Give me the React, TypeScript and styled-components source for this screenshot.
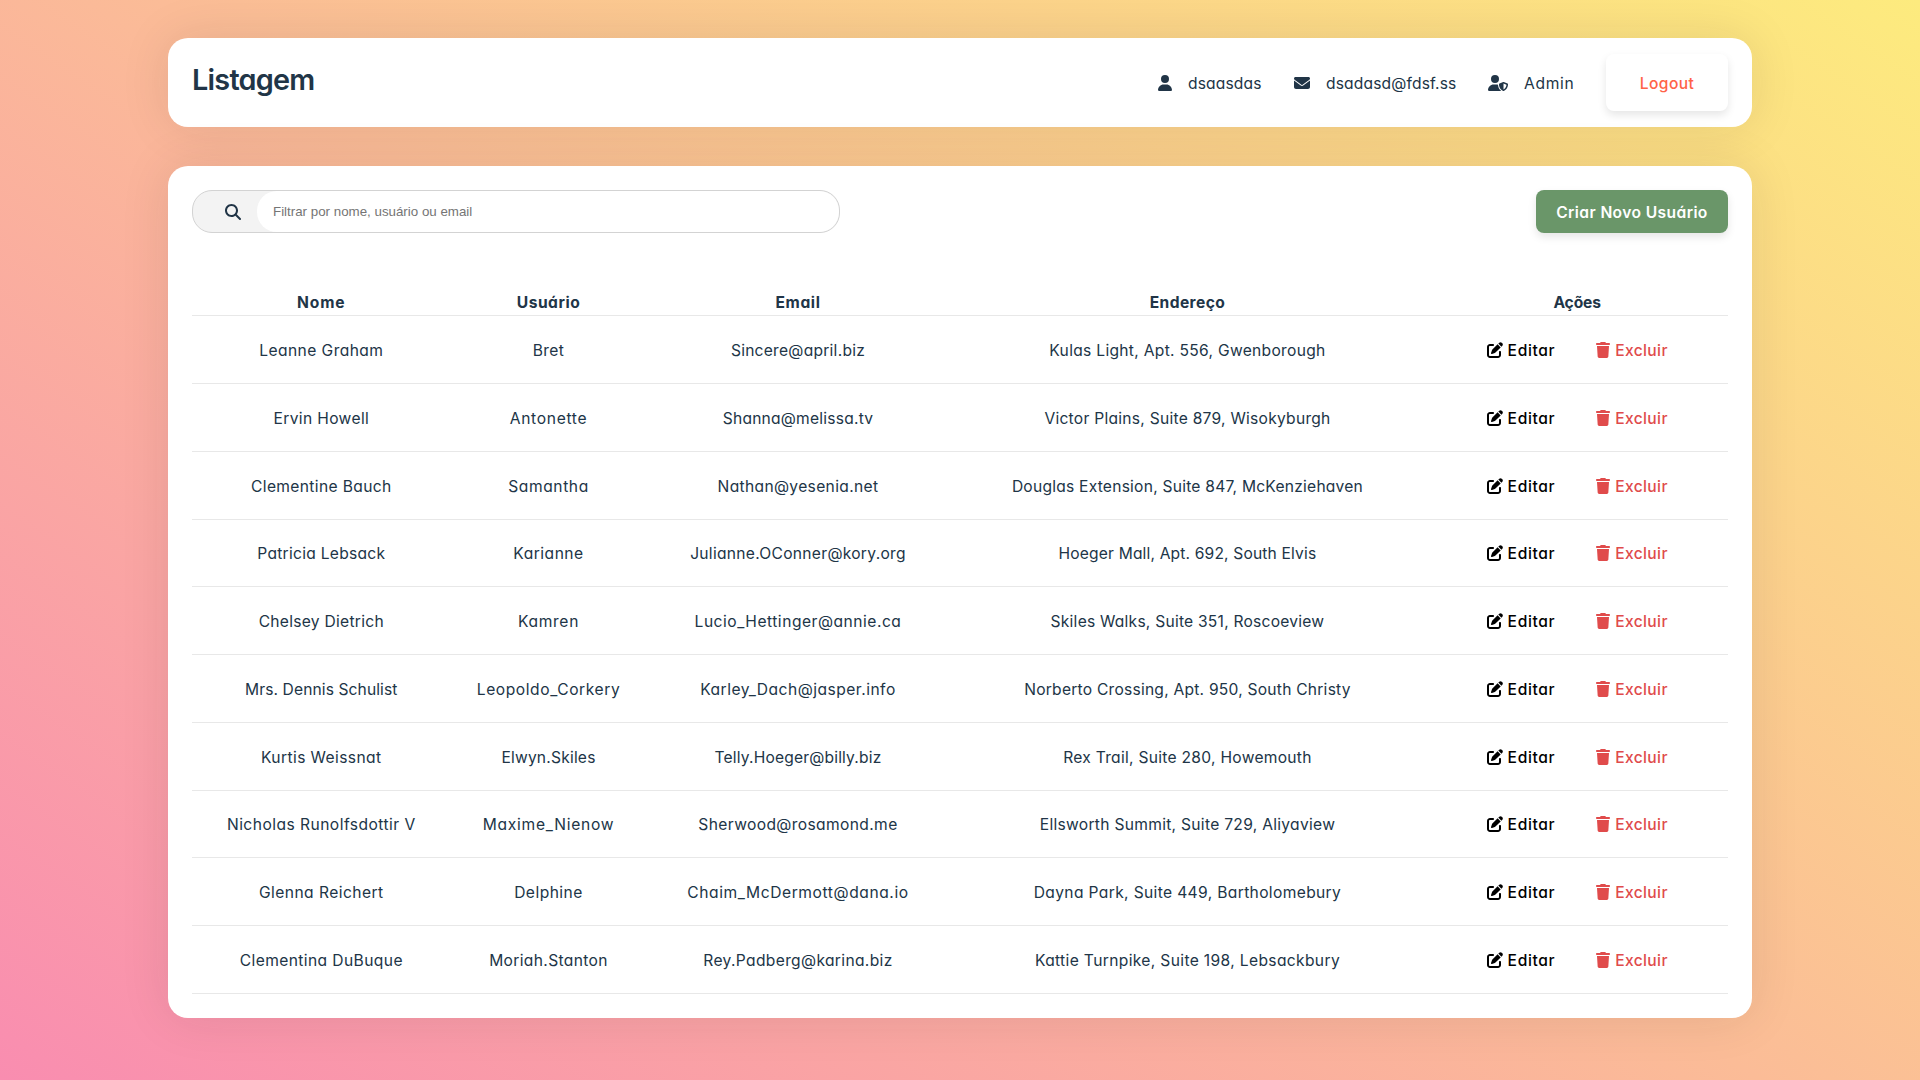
import React from 'react';
import styled, { createGlobalStyle } from 'styled-components';
import { FaUser, FaEnvelope, FaUserShield, FaMagnifyingGlass, FaPenToSquare, FaTrash } from 'react-icons/fa6';

const GlobalStyle = createGlobalStyle`
  * { box-sizing: border-box; }
  body {
    margin: 0;
    min-height: 100vh;
    color: #213547;
    background: linear-gradient(34deg, #f98db0, #fdeb7e) no-repeat;
    font: 400 15.6px/20px Inter, 'Noto Sans', sans-serif;
    font-feature-settings: 'cv11' 1;
  }
`;

const Page = styled.div`
  width: 1584px;
  height: 1080px;
  margin: 0 auto;
  padding-top: 38px;
  display: flex;
  flex-direction: column;
  gap: 39px;
`;

const Card = styled.section`
  background: #fff;
  border-radius: 20px;
  padding: 0 24px;
  box-shadow: 0 0 50px rgba(34, 34, 34, 0.1);
`;

const Header = styled(Card)`
  height: 89px;
  display: flex;
  align-items: center;
  justify-content: space-between;
`;

const Title = styled.h1`
  margin: 0 0 5px;
  font-size: 28.8px;
  line-height: 36px;
  font-weight: 560;
  letter-spacing: -0.75px;
`;

const Profile = styled.div`
  display: flex;
  align-items: center;
  gap: 32px;
`;

const Info = styled.div<{ $icon: number }>`
  display: flex;
  align-items: center;
  gap: 16px;
  svg { flex: none; height: 16px; width: ${(p) => p.$icon}px; }
`;

const Label = styled.span<{ $w: number; $track: number }>`
  width: ${(p) => p.$w}px;
  padding-top: 2px;
  letter-spacing: ${(p) => p.$track}px;
  white-space: nowrap;
`;

const Logout = styled.button`
  width: 122px;
  height: 57px;
  padding: 2px 0 0;
  border: 0;
  border-radius: 8px;
  background: #fff;
  color: #ff6347;
  font: inherit;
  font-weight: 500;
  letter-spacing: 0.45px;
  box-shadow: 0 4px 8px rgba(0, 0, 0, 0.1);
`;

const Content = styled(Card)`
  height: 852px;
  padding-top: 24px;
`;

const Toolbar = styled.div`
  display: flex;
  justify-content: space-between;
  height: 43px;
`;

const Search = styled.label`
  display: flex;
  align-items: center;
  width: 648px;
  border: 1px solid #d3d3d3;
  border-radius: 20px;
  background: #f3f3f3;
  overflow: hidden;
  svg { width: 16px; height: 16px; margin: 0 16px 0 32px; }
`;

const Field = styled.input`
  flex: 1;
  height: 100%;
  padding: 0 16px;
  border: 0;
  border-radius: 20px;
  background: #fff;
  font: 13.333px 'Liberation Sans', Arial, sans-serif;
  &::placeholder { color: #757575; }
`;

const Create = styled.button`
  width: 192px;
  padding: 2px 0 0;
  border: 0;
  border-radius: 8px;
  background: #6a9669;
  color: #fff;
  font: inherit;
  font-weight: 600;
  letter-spacing: 0.4px;
  box-shadow: 0 4px 8px rgba(0, 0, 0, 0.1);
`;

const Table = styled.div`
  margin-top: 56px;
`;

const Row = styled.div`
  display: grid;
  grid-template-columns: 257.6px 196.8px 302.2px 476.8px 302.6px;
  align-items: center;
  justify-items: center;
  height: 67.75px;
  padding-top: 2.5px;
  border-bottom: 1px solid #e8e8e8;
`;

const HeadRow = styled(Row)`
  height: 27.49px;
  padding-top: 2px;
  font-weight: 700;
`;

const Cell = styled.span<{ $track: number }>`
  padding-left: 1px;
  letter-spacing: ${(p) => p.$track}px;
  white-space: nowrap;
`;

const Actions = styled.div`
  display: flex;
  gap: 41px;
  padding-left: 1px;
`;

const Action = styled.button<{ $color: string; $icon: number; $track: number }>`
  display: flex;
  align-items: center;
  gap: 5px;
  padding: 0;
  border: 0;
  background: none;
  color: ${(p) => p.$color};
  font: inherit;
  font-weight: 500;
  letter-spacing: ${(p) => p.$track}px;
  svg { flex: none; width: ${(p) => p.$icon}px; height: 16px; margin-bottom: 2px; }
`;

type Entry = [text: string, track: number];

const headings: Entry[] = [['Nome', 0.85], ['Usuário', 0.5], ['Email', 0.6], ['Endereço', 0.4], ['Ações', -0.1]];

const users: Entry[][] = [
  [['Leanne Graham', 0.43], ['Bret', 0.4], ['Sincere@april.biz', 0.25], ['Kulas Light, Apt. 556, Gwenborough', 0.3]],
  [['Ervin Howell', 0.36], ['Antonette', 0.68], ['Shanna@melissa.tv', 0.22], ['Victor Plains, Suite 879, Wisokyburgh', 0.26]],
  [['Clementine Bauch', 0.35], ['Samantha', 0.6], ['Nathan@yesenia.net', 0.34], ['Douglas Extension, Suite 847, McKenziehaven', 0.23]],
  [['Patricia Lebsack', 0.27], ['Karianne', 0.5], ['Julianne.OConner@kory.org', 0.29], ['Hoeger Mall, Apt. 692, South Elvis', 0.16]],
  [['Chelsey Dietrich', 0.27], ['Kamren', 0.7], ['Lucio_Hettinger@annie.ca', 0.51], ['Skiles Walks, Suite 351, Roscoeview', 0.23]],
  [['Mrs. Dennis Schulist', 0.1], ['Leopoldo_Corkery', 0.57], ['Karley_Dach@jasper.info', 0.48], ['Norberto Crossing, Apt. 950, South Christy', 0.23]],
  [['Kurtis Weissnat', 0.4], ['Elwyn.Skiles', 0.2], ['Telly.Hoeger@billy.biz', 0.17], ['Rex Trail, Suite 280, Howemouth', 0.28]],
  [['Nicholas Runolfsdottir V', 0.46], ['Maxime_Nienow', 0.75], ['Sherwood@rosamond.me', 0.37], ['Ellsworth Summit, Suite 729, Aliyaview', 0.29]],
  [['Glenna Reichert', 0.45], ['Delphine', 0.46], ['Chaim_McDermott@dana.io', 0.58], ['Dayna Park, Suite 449, Bartholomebury', 0.35]],
  [['Clementina DuBuque', 0.4], ['Moriah.Stanton', 0.35], ['Rey.Padberg@karina.biz', 0.34], ['Kattie Turnpike, Suite 198, Lebsackbury', 0.35]],
];

export default function App() {
  return (
    <>
      <GlobalStyle />
      <Page>
        <Header as="header">
          <Title>Listagem</Title>
          <Profile>
            <Info $icon={14}><FaUser /><Label $w={74} $track={0.15}>dsaasdas</Label></Info>
            <Info $icon={16}><FaEnvelope /><Label $w={130} $track={0.15}>dsadasd@fdsf.ss</Label></Info>
            <Info $icon={20}><FaUserShield /><Label $w={50} $track={0.7}>Admin</Label></Info>
            <Logout>Logout</Logout>
          </Profile>
        </Header>
        <Content as="main">
          <Toolbar>
            <Search>
              <FaMagnifyingGlass />
              <Field placeholder="Filtrar por nome, usuário ou email" />
            </Search>
            <Create>Criar Novo Usuário</Create>
          </Toolbar>
          <Table>
            <HeadRow>
              {headings.map(([text, track]) => <Cell key={text} $track={track}>{text}</Cell>)}
            </HeadRow>
            {users.map((user) => (
              <Row key={user[0][0]}>
                {user.map(([text, track]) => <Cell key={text} $track={track}>{text}</Cell>)}
                <Actions>
                  <Action $color="#000" $icon={16} $track={0.65}><FaPenToSquare />Editar</Action>
                  <Action $color="#e04b4b" $icon={14} $track={0.35}><FaTrash />Excluir</Action>
                </Actions>
              </Row>
            ))}
          </Table>
        </Content>
      </Page>
    </>
  );
}
